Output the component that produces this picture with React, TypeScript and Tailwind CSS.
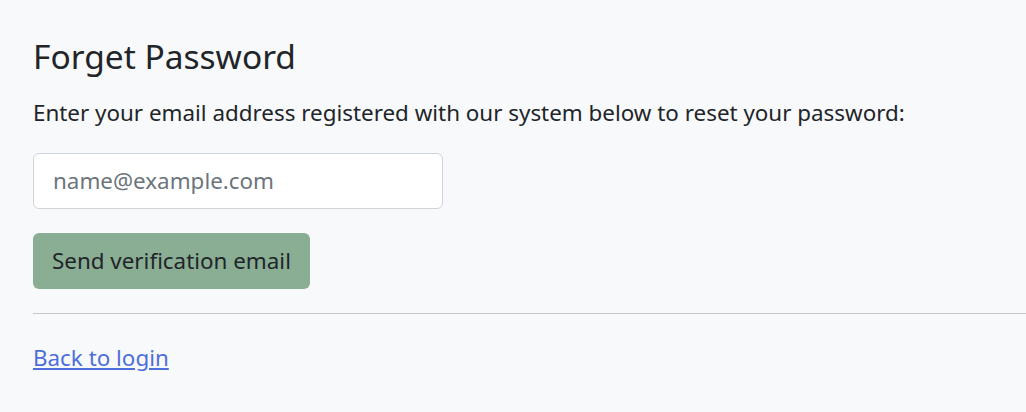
export default function App() {
  return (
    <div className="min-h-[412px] bg-[#f8f9fa] pl-[33px] pt-[36px] text-[#212529] font-['Noto_Sans',sans-serif]">
      <h3 className="text-[33.5px] leading-[1.2] mb-[20px]">Forget Password</h3>
      <p className="text-[22.4px] leading-[1.5] mb-[23px]">
        Enter your email address registered with our system below to reset your password:
      </p>
      <input
        type="email"
        placeholder="name@example.com"
        className="block w-[410px] h-[56px] bg-white border border-[#ced4da] rounded-[6px] px-[19px] text-[22.4px] placeholder:text-[#6c757d] outline-none"
      />
      <button className="mt-[24px] h-[56px] px-[19px] rounded-[6px] bg-[#8aae94] text-[22.4px] text-[#212529]">
        Send verification email
      </button>
      <hr className="mt-[24px] border-t border-[#c6c7c8]" />
      <a href="#" className="inline-block mt-[27px] text-[22.4px] text-[#4e6fdb] underline">
        Back to login
      </a>
    </div>
  );
}
